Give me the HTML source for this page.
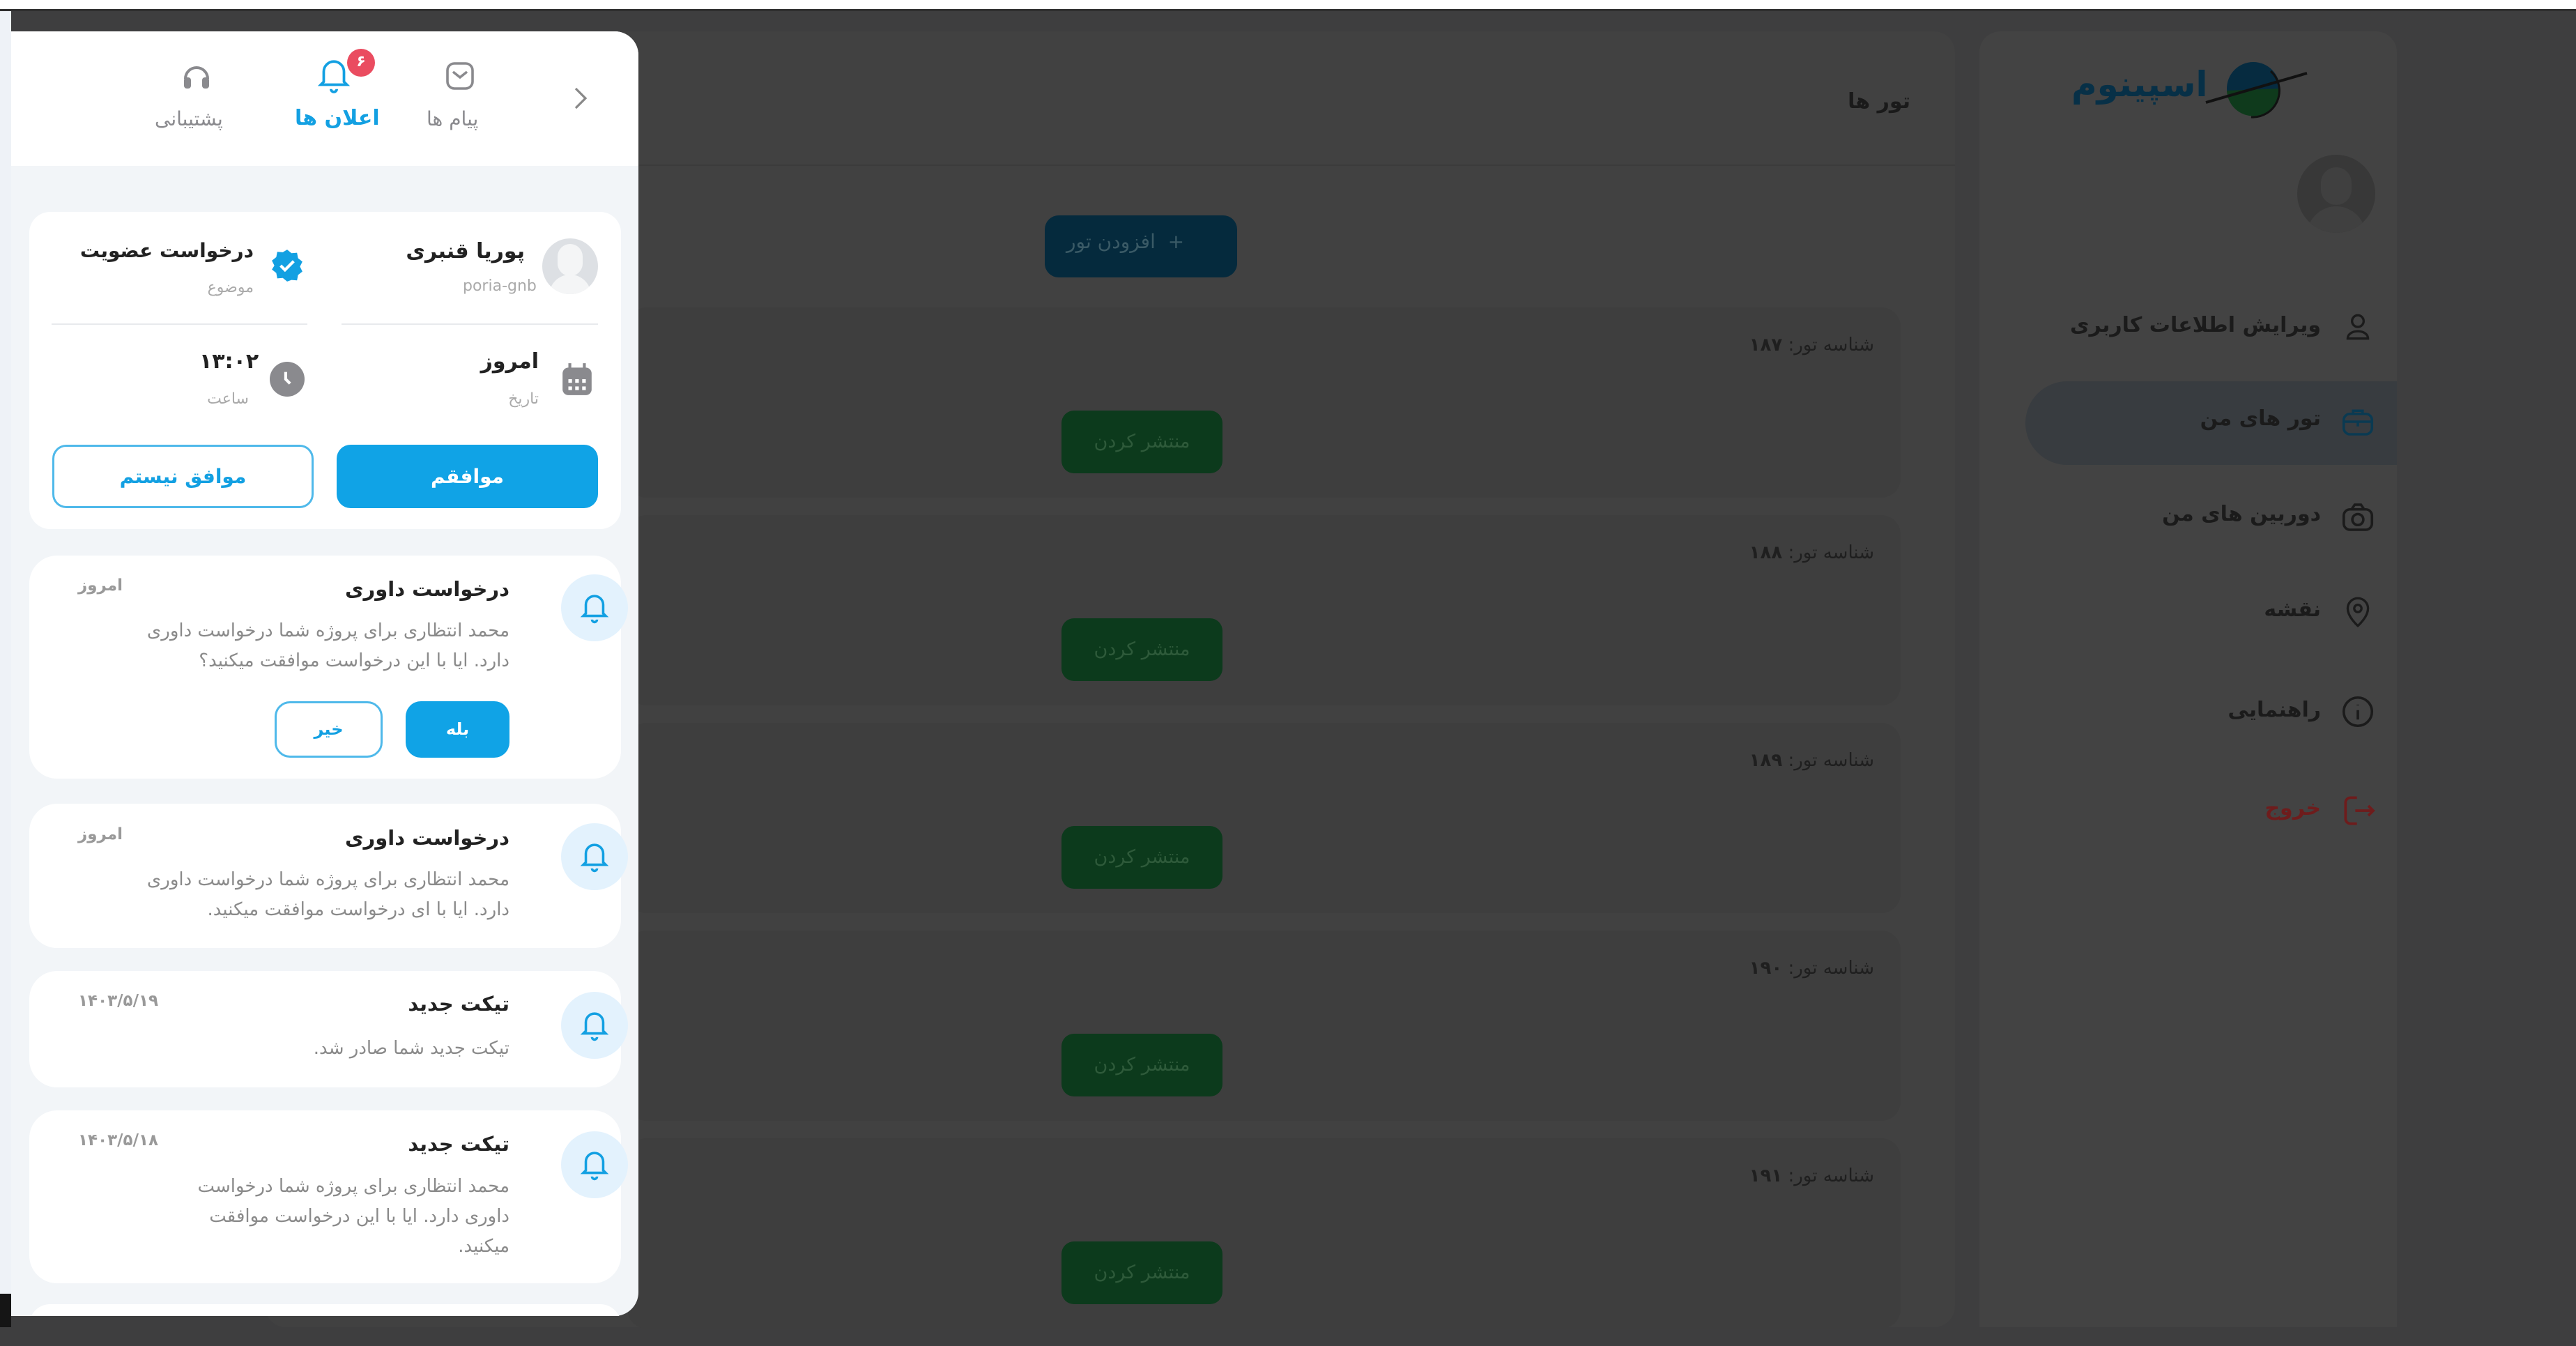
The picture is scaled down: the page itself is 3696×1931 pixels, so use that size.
<!DOCTYPE html>
<html><head><meta charset="utf-8">
<style>
*{margin:0;padding:0;box-sizing:border-box}
body{width:3696px;height:1904px;overflow:hidden;background:#3e3e3f;font-family:"DejaVu Sans","Liberation Sans",sans-serif;position:relative}
.a{position:absolute}
.r{direction:rtl;white-space:nowrap}
.card{position:absolute;background:#fff;border-radius:40px;left:42px;width:849px}
.bell{position:absolute;width:96px;height:96px;border-radius:50%;background:#e3f2fd;left:763px}
.bell svg{position:absolute;left:26px;top:24px}
.ttl{position:absolute;right:160px;font-size:29px;font-weight:bold;color:#222}
.body{position:absolute;right:160px;font-size:26px;color:#8a8a8a;line-height:43px;text-align:right}
.dt{position:absolute;left:70px;font-size:23px;color:#999;font-weight:bold}
.mi{position:absolute;right:366px;font-size:30px;font-weight:bold;color:#1b1b1b}
</style></head><body>
<div class="a" style="left:0;top:0;width:3696px;height:13px;background:#fff"></div>
<div class="a" style="left:0;top:13px;width:3696px;height:3px;background:#2e2e2e"></div>
<div class="a" style="left:0;top:16px;width:16px;height:1840px;background:#eef2f7"></div>
<div class="a" style="left:0;top:1856px;width:16px;height:48px;background:#151515"></div>

<div class="a" style="left:380px;top:45px;width:2425px;height:1859px;background:#414141;border-radius:30px"></div>
<div class="a" style="left:380px;top:236px;width:2425px;height:2px;background:#3b3b3b"></div>
<div class="a r" style="right:955px;top:128px;font-size:30px;font-weight:bold;color:#1a1a1a">تور ها</div>
<div class="a" style="left:1499px;top:309px;width:276px;height:89px;background:#052a3d;border-radius:20px"></div>
<div class="a r" style="left:1530px;top:330px;font-size:28px;color:#3a5a66">+ &nbsp;افزودن تور</div>

<div class="a" style="left:900px;top:441px;width:1827px;height:273px;background:#3e3e3e;border-radius:28px"></div>
<div class="a" style="left:900px;top:739px;width:1827px;height:273px;background:#3e3e3e;border-radius:28px"></div>
<div class="a" style="left:900px;top:1037px;width:1827px;height:273px;background:#3e3e3e;border-radius:28px"></div>
<div class="a" style="left:900px;top:1335px;width:1827px;height:273px;background:#3e3e3e;border-radius:28px"></div>
<div class="a" style="left:900px;top:1633px;width:1827px;height:273px;background:#3e3e3e;border-radius:28px"></div>

<div class="a r" style="right:1007px;top:480px;font-size:26px;color:#1f1f1f">شناسه تور: <b>۱۸۷</b></div>
<div class="a r" style="right:1007px;top:778px;font-size:26px;color:#1f1f1f">شناسه تور: <b>۱۸۸</b></div>
<div class="a r" style="right:1007px;top:1076px;font-size:26px;color:#1f1f1f">شناسه تور: <b>۱۸۹</b></div>
<div class="a r" style="right:1007px;top:1374px;font-size:26px;color:#1f1f1f">شناسه تور: <b>۱۹۰</b></div>
<div class="a r" style="right:1007px;top:1672px;font-size:26px;color:#1f1f1f">شناسه تور: <b>۱۹۱</b></div>

<div class="a" style="left:1523px;top:589px;width:231px;height:90px;background:#0c3a1c;border-radius:18px;color:#2e5a3a;font-size:27px;text-align:center;line-height:90px">منتشر کردن</div>
<div class="a" style="left:1523px;top:887px;width:231px;height:90px;background:#0c3a1c;border-radius:18px;color:#2e5a3a;font-size:27px;text-align:center;line-height:90px">منتشر کردن</div>
<div class="a" style="left:1523px;top:1185px;width:231px;height:90px;background:#0c3a1c;border-radius:18px;color:#2e5a3a;font-size:27px;text-align:center;line-height:90px">منتشر کردن</div>
<div class="a" style="left:1523px;top:1483px;width:231px;height:90px;background:#0c3a1c;border-radius:18px;color:#2e5a3a;font-size:27px;text-align:center;line-height:90px">منتشر کردن</div>
<div class="a" style="left:1523px;top:1781px;width:231px;height:90px;background:#0c3a1c;border-radius:18px;color:#2e5a3a;font-size:27px;text-align:center;line-height:90px">منتشر کردن</div>

<div class="a" style="left:2840px;top:45px;width:599px;height:1859px;background:#434343;border-radius:30px 30px 0 0"></div>
<div class="a" style="left:2906px;top:547px;width:533px;height:120px;background:#383c40;border-radius:60px 0 0 60px"></div>
<svg class="a" style="left:2970px;top:75px" width="350" height="110" viewBox="0 0 350 110">
<circle cx="263" cy="52" r="38" fill="#062b40"/>
<path d="M225 55 A38 38 0 0 0 301 52 Z" fill="#0f3a1c"/>
<line x1="195" y1="72" x2="340" y2="30" stroke="#111" stroke-width="4"/>
<path d="M288 27 A38 38 0 0 1 260 93" stroke="#111" stroke-width="3" fill="none"/>
</svg>
<div class="a r" style="left:2972px;top:92px;font-size:50px;font-weight:bold;color:#073047">اسپینوم</div>
<div class="a" style="left:3296px;top:222px;width:112px;height:112px;border-radius:50%;background:#383838;overflow:hidden">
  <div class="a" style="left:34px;top:18px;width:44px;height:54px;border-radius:22px;background:#404040"></div>
  <div class="a" style="left:14px;top:74px;width:84px;height:60px;border-radius:42px 42px 0 0;background:#404040"></div>
</div>

<div class="mi r" style="top:449px">ویرایش اطلاعات کاربری</div>
<div class="mi r" style="top:583px">تور های من</div>
<div class="mi r" style="top:720px">دوربین های من</div>
<div class="mi r" style="top:857px">نقشه</div>
<div class="mi r" style="top:1001px">راهنمایی</div>
<div class="mi r" style="top:1142px;color:#6e1c1c">خروج</div>
<svg class="a" style="left:3358px;top:444px" width="50" height="50" viewBox="0 0 24 24" fill="none" stroke="#1b1b1b" stroke-width="1.6"><circle cx="12" cy="8" r="4"/><path d="M5 20c0-3 3-5 7-5s7 2 7 5z"/></svg>
<svg class="a" style="left:3356px;top:578px" width="54" height="54" viewBox="0 0 24 24" fill="none" stroke="#0a3a52" stroke-width="1.6"><rect x="3" y="7" width="18" height="13" rx="4"/><path d="M9 7V5h6v2M3 12h18M12 12v3"/></svg>
<svg class="a" style="left:3356px;top:715px" width="54" height="54" viewBox="0 0 24 24" fill="none" stroke="#1b1b1b" stroke-width="1.6"><rect x="3" y="7" width="18" height="13" rx="4"/><path d="M8 7l2-3h4l2 3"/><circle cx="12" cy="13.5" r="3.5"/></svg>
<svg class="a" style="left:3358px;top:852px" width="50" height="50" viewBox="0 0 24 24" fill="none" stroke="#1b1b1b" stroke-width="1.6"><path d="M12 22s-7-6-7-12a7 7 0 0 1 14 0c0 6-7 12-7 12z"/><circle cx="12" cy="10" r="2.5"/></svg>
<svg class="a" style="left:3356px;top:994px" width="54" height="54" viewBox="0 0 24 24" fill="none" stroke="#1b1b1b" stroke-width="1.6"><circle cx="12" cy="12" r="9"/><path d="M12 11v6M12 7.5v.5"/></svg>
<svg class="a" style="left:3356px;top:1135px" width="56" height="56" viewBox="0 0 24 24" fill="none" stroke="#6e1c1c" stroke-width="1.6"><path d="M11 4H7a3 3 0 0 0-3 3v10a3 3 0 0 0 3 3h4M10 12h11M18 9l3 3-3 3"/></svg>

<div class="a" style="left:16px;top:45px;width:900px;height:1843px;background:#f2f5f8;border-radius:0 34px 34px 0;overflow:hidden">
  <div class="a" style="left:0;top:0;width:900px;height:193px;background:#fff"></div>
</div>
<svg class="a" style="left:258px;top:85px" width="48" height="48" viewBox="0 0 24 24" fill="#8a8a8e"><path d="M4 14a8 8 0 0 1 16 0" fill="none" stroke="#8a8a8e" stroke-width="2"/><rect x="3" y="13" width="5" height="8" rx="2"/><rect x="16" y="13" width="5" height="8" rx="2"/></svg>
<div class="a r" style="left:222px;top:154px;font-size:28px;color:#8a8a8e">پشتیبانی</div>
<svg class="a" style="left:454px;top:80px" width="50" height="56" viewBox="0 0 24 27" fill="none" stroke="#13a0e2" stroke-width="1.8"><path d="M5 18V11a7 7 0 0 1 14 0v7l2 2H3z"/><path d="M10 23a2 2 0 0 0 4 0"/></svg>
<div class="a" style="left:498px;top:70px;width:40px;height:40px;border-radius:50%;background:#ea4c60;color:#fff;font-size:22px;font-weight:bold;text-align:center;line-height:38px">۶</div>
<div class="a r" style="left:423px;top:152px;font-size:30px;font-weight:bold;color:#13a0e2">اعلان ها</div>
<svg class="a" style="left:636px;top:85px" width="48" height="48" viewBox="0 0 24 24" fill="none" stroke="#8a8a8e" stroke-width="1.8"><rect x="3" y="3" width="18" height="18" rx="5"/><path d="M7 9l5 4 5-4"/></svg>
<div class="a r" style="left:612px;top:154px;font-size:28px;color:#8a8a8e">پیام ها</div>
<svg class="a" style="left:820px;top:123px" width="24" height="36" viewBox="0 0 12 18" fill="none" stroke="#888" stroke-width="1.6"><path d="M3 2l7 7-7 7"/></svg>

<div class="card" style="top:304px;height:455px;border-radius:30px">
  <div class="a" style="left:736px;top:38px;width:80px;height:80px;border-radius:50%;background:#dde0e4;overflow:hidden">
    <div class="a" style="left:22px;top:8px;width:36px;height:46px;border-radius:18px;background:#f4f5f6"></div>
    <div class="a" style="left:10px;top:52px;width:60px;height:40px;border-radius:30px 30px 0 0;background:#f4f5f6"></div>
  </div>
  <div class="a r" style="right:138px;top:39px;font-size:30px;font-weight:bold;color:#222">پوریا قنبری</div>
  <div class="a" style="left:622px;top:94px;font-size:22px;color:#aaa">poria-gnb</div>
  <svg class="a" style="left:345px;top:52px" width="50" height="50" viewBox="0 0 24 24"><path d="M12 1l3 2.5 3.8-.3.7 3.7 3 2.4-1.7 3.4 1.7 3.4-3 2.4-.7 3.7-3.8-.3L12 23l-3-2.5-3.8.3-.7-3.7-3-2.4L3.2 12 1.5 8.6l3-2.4.7-3.7 3.8.3z" fill="#13a0e2"/><path d="M7.5 12l3 3 6-6" stroke="#fff" stroke-width="2" fill="none"/></svg>
  <div class="a r" style="right:527px;top:39px;font-size:28px;font-weight:bold;color:#222">درخواست عضویت</div>
  <div class="a r" style="right:527px;top:96px;font-size:22px;color:#aaa">موضوع</div>
  <div class="a" style="left:448px;top:160px;width:368px;height:2px;background:#e8eaed"></div>
  <div class="a" style="left:32px;top:160px;width:367px;height:2px;background:#e8eaed"></div>
  <svg class="a" style="left:763px;top:215px" width="46" height="50" viewBox="0 0 22 24" fill="#8a8a8e"><rect x="1" y="4" width="20" height="19" rx="4"/><rect x="5" y="1" width="2" height="5"/><rect x="15" y="1" width="2" height="5"/><g fill="#fff"><rect x="5" y="12" width="2.5" height="2.5"/><rect x="9.7" y="12" width="2.5" height="2.5"/><rect x="14.5" y="12" width="2.5" height="2.5"/><rect x="5" y="17" width="2.5" height="2.5"/><rect x="9.7" y="17" width="2.5" height="2.5"/><rect x="14.5" y="17" width="2.5" height="2.5"/></g></svg>
  <div class="a r" style="right:118px;top:197px;font-size:30px;font-weight:bold;color:#222">امروز</div>
  <div class="a r" style="right:118px;top:256px;font-size:22px;color:#aaa">تاریخ</div>
  <div class="a" style="left:345px;top:215px;width:50px;height:50px;border-radius:50%;background:#8a8a8e"></div>
  <svg class="a" style="left:345px;top:215px" width="50" height="50" viewBox="0 0 24 24" fill="none" stroke="#fff" stroke-width="2"><path d="M11 7v5l3 3"/></svg>
  <div class="a" style="left:244px;top:197px;font-size:30px;font-weight:bold;color:#222">۱۳:۰۲</div>
  <div class="a r" style="right:534px;top:256px;font-size:22px;color:#aaa">ساعت</div>
  <div class="a" style="left:441px;top:334px;width:375px;height:91px;border-radius:20px;background:#10a3e6;color:#fff;font-size:28px;font-weight:bold;text-align:center;line-height:91px">موافقم</div>
  <div class="a" style="left:33px;top:334px;width:375px;height:91px;border-radius:20px;border:3px solid #4fb9ea;background:#fff;color:#13a0e2;font-size:28px;font-weight:bold;text-align:center;line-height:85px">موافق نیستم</div>
</div>

<div class="card" style="top:797px;height:320px">
  <div class="bell" style="top:27px"><svg width="44" height="48" viewBox="0 0 24 27" fill="none" stroke="#13a0e2" stroke-width="2"><path d="M5 18V11a7 7 0 0 1 14 0v7l2 2H3z"/><path d="M10 23a2 2 0 0 0 4 0"/></svg></div>
  <div class="ttl r" style="top:31px">درخواست داوری</div>
  <div class="dt r" style="top:30px">امروز</div>
  <div class="body r" style="top:87px">محمد انتظاری برای پروژه شما درخواست داوری<br>دارد. ایا با این درخواست موافقت میکنید؟</div>
  <div class="a" style="left:540px;top:209px;width:149px;height:81px;border-radius:22px;background:#10a3e6;color:#fff;font-size:24px;font-weight:bold;text-align:center;line-height:81px">بله</div>
  <div class="a" style="left:352px;top:209px;width:155px;height:81px;border-radius:22px;border:3px solid #4fb9ea;color:#13a0e2;font-size:24px;font-weight:bold;text-align:center;line-height:75px">خیر</div>
</div>

<div class="card" style="top:1153px;height:207px">
  <div class="bell" style="top:28px"><svg width="44" height="48" viewBox="0 0 24 27" fill="none" stroke="#13a0e2" stroke-width="2"><path d="M5 18V11a7 7 0 0 1 14 0v7l2 2H3z"/><path d="M10 23a2 2 0 0 0 4 0"/></svg></div>
  <div class="ttl r" style="top:32px">درخواست داوری</div>
  <div class="dt r" style="top:31px">امروز</div>
  <div class="body r" style="top:88px">محمد انتظاری برای پروژه شما درخواست داوری<br>دارد. ایا با ای درخواست موافقت میکنید.</div>
</div>

<div class="card" style="top:1393px;height:167px">
  <div class="bell" style="top:30px"><svg width="44" height="48" viewBox="0 0 24 27" fill="none" stroke="#13a0e2" stroke-width="2"><path d="M5 18V11a7 7 0 0 1 14 0v7l2 2H3z"/><path d="M10 23a2 2 0 0 0 4 0"/></svg></div>
  <div class="ttl r" style="top:30px">تیکت جدید</div>
  <div class="dt" style="top:30px">۱۴۰۳/۵/۱۹</div>
  <div class="body r" style="top:90px">تیکت جدید شما صادر شد.</div>
</div>

<div class="card" style="top:1593px;height:248px">
  <div class="bell" style="top:30px"><svg width="44" height="48" viewBox="0 0 24 27" fill="none" stroke="#13a0e2" stroke-width="2"><path d="M5 18V11a7 7 0 0 1 14 0v7l2 2H3z"/><path d="M10 23a2 2 0 0 0 4 0"/></svg></div>
  <div class="ttl r" style="top:31px">تیکت جدید</div>
  <div class="dt" style="top:30px">۱۴۰۳/۵/۱۸</div>
  <div class="body r" style="top:88px">محمد انتظاری برای پروژه شما درخواست<br>داوری دارد. ایا با این درخواست موافقت<br>میکنید.</div>
</div>
<div class="card" style="top:1871px;height:60px;clip-path:inset(0 0 43px 0)"></div>
</body></html>
